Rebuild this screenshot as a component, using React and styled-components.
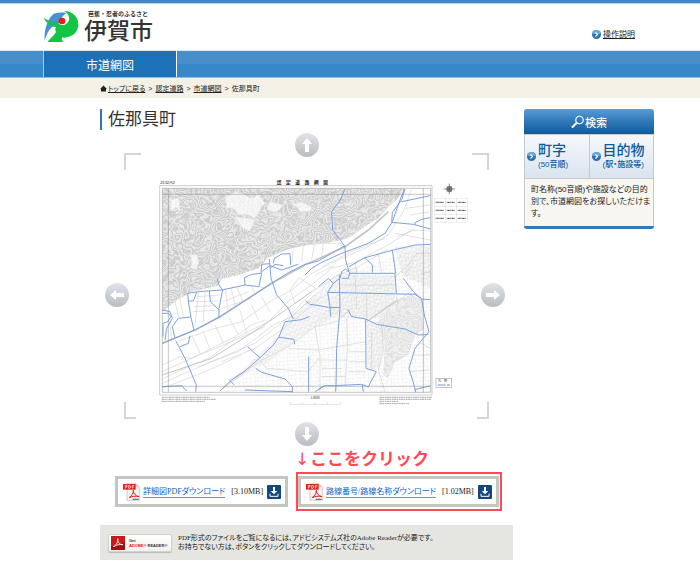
import React from "react";
import styled, { createGlobalStyle } from "styled-components";

const GlobalStyle = createGlobalStyle`
    * {
        box-sizing: border-box;
    }
    body {
        margin: 0;
        background: #fff;
        color: #333;
        font-family: "Liberation Sans", "Noto Sans CJK JP", sans-serif;
        font-feature-settings: "palt";
    }
    h1, h2, p {
        margin: 0;
        font-weight: normal;
    }
    a {
        color: inherit;
    }
    svg {
        display: block;
        flex: none;
    }
`;

const Header = styled.header`
    display: flex;
    justify-content: space-between;
    align-items: center;
    height: 51px;
    padding: 0 65px 0 43px;
    border-top: 3px solid #4389c4;
    border-bottom: 1px solid #dfe8ef;
    box-shadow: inset 0 1px #b5d5ee;
`;

const Brand = styled.a`
    display: flex;
    gap: 5px;
    align-items: center;
    text-decoration: none;
    color: #333;
`;

const BrandText = styled.span`
    display: flex;
    flex-direction: column;
    padding-top: 2px;
`;

const Catch = styled.span`
    padding-left: 4px;
    font-size: 6px;
    font-weight: bold;
    font-feature-settings: normal;
    line-height: 7px;
`;

const CityName = styled.span`
    font-size: 23px;
    font-weight: 500;
    font-feature-settings: normal;
    line-height: 26px;
`;

const HelpLink = styled.a`
    display: flex;
    align-items: center;
    gap: 2px;
    margin-top: 16px;
    font-size: 8px;
    line-height: 12px;
    color: #222;
`;

const Nav = styled.nav`
    display: flex;
    height: 27px;
    padding-left: 43px;
    background: linear-gradient(#468fca 50%, #3887c8 50%);
    border-bottom: 1px solid #8dbce2;
`;

const NavTab = styled.a`
    display: flex;
    align-items: center;
    justify-content: center;
    width: 134px;
    border-left: 1px solid #a8cbe8;
    border-right: 1px solid #fff;
    background: #1d71b7;
    color: #fff;
    font-size: 12px;
    text-decoration: none;
`;

const Breadcrumb = styled.nav`
    display: flex;
    align-items: center;
    gap: 3px;
    height: 20px;
    padding: 0 46px 0 100px;
    background: #f3f0e5;
    font-size: 7px;
    color: #222;
`;

const Home = styled.span`
    display: flex;
    align-items: center;
    gap: 1px;
`;

const Columns = styled.div`
    display: flex;
    align-items: flex-start;
    gap: 11px;
    padding: 11px 46px 8px 100px;
`;

const Main = styled.main`
    flex: 1;
    min-width: 0;
`;

const Title = styled.h1`
    padding-left: 6px;
    border-left: 2px solid #2a76ba;
    font-size: 17px;
    font-feature-settings: normal;
    line-height: 21px;
`;

const Viewer = styled.div`
    display: grid;
    grid-template-columns: 28px 1fr 24px;
    grid-template-rows: 34px 1fr 24px;
    margin: 3px 8px 0 5px;
`;

const Frame = styled.div`
    position: relative;
    grid-area: 1 / 1 / -1 / -1;
    margin: 20px 16px 27px 19px;
    padding: 22px 19px 9px 31px;
`;

const Corner = styled.span`
    position: absolute;
    width: ${(props) => (props.$y === "bottom" ? 12 : 17)}px;
    height: 17px;
    ${(props) => props.$y}: 0;
    ${(props) => props.$x}: 0;
    border: 0 solid #d5d5d5;
    border-${(props) => props.$y}-width: 2px;
    border-${(props) => props.$x}-width: 2px;
`;

const MoveButton = styled.button`
    z-index: 1;
    grid-area: ${(props) => props.$area};
    place-self: ${(props) => props.$place};
    display: flex;
    align-items: center;
    justify-content: center;
    width: 24px;
    height: 24px;
    padding: 0;
    border: 0;
    border-radius: 50%;
    background: linear-gradient(#e0e3e9, #b9bcc0);
    cursor: pointer;
`;

const MapSvg = styled.svg`
    width: 100%;
    height: auto;
    font-family: "Noto Sans CJK JP", sans-serif;
`;

const Note = styled.p`
    padding-left: 195px;
    font: bold 17px/24px "Noto Sans CJK JP", sans-serif;
    color: #fa4d58;
    white-space: nowrap;
`;

const NoteArrow = styled.span`
    display: inline-block;
    width: 15px;
    font-family: "DejaVu Sans", sans-serif;
    font-weight: normal;
`;

const Downloads = styled.div`
    display: flex;
    gap: 10px;
    margin-top: 5px;
    padding-left: 15px;
`;

const DownloadBox = styled.div`
    position: relative;
    display: flex;
    align-items: center;
    height: 31px;
    padding: 0 4px 0 5px;
    border: 3px solid #c5c6bf;
    white-space: nowrap;
`;

const Highlight = styled.span`
    position: absolute;
    inset: -7px -6px -7px -5px;
    border: 2px solid #fa4d58;
    pointer-events: none;
`;

const FileLink = styled.a`
    margin-left: 2px;
    border-bottom: 1px solid #5b9be0;
    font: 8px/11px "Liberation Serif", "Noto Sans CJK JP", serif;
    font-feature-settings: "palt";
    color: #0a63c4;
    text-decoration: none;
`;

const FileSize = styled.span`
    margin: 0 4px 0 6px;
    font: 8px/12px "Liberation Serif", serif;
    color: #222;
`;

const Reader = styled.div`
    display: flex;
    align-items: center;
    gap: 6px;
    height: 35px;
    margin-top: 18px;
    padding: 0 8px;
    background: #e5e6e1;
    font: 7px/9px "Liberation Sans Narrow", "Liberation Serif", "Noto Sans CJK JP", serif;
    font-feature-settings: "palt";
    color: #222;
`;

const ReaderBadge = styled.a`
    display: flex;
    align-items: center;
    gap: 4px;
    width: 64px;
    height: 18px;
    padding: 1px 2px;
    border: 1px solid #d2d2ce;
    border-radius: 2px;
    background: linear-gradient(#fff, #f0f0ee);
    box-shadow: 0 1px 1px #b8b8b4;
    font: bold 4px/5px "Liberation Sans", sans-serif;
    text-decoration: none;
    white-space: nowrap;
    color: #333;

    b {
        color: #e2231a;
    }
`;

const Search = styled.aside`
    width: 130px;
    border-bottom: 3px solid #2f7abb;
    border-radius: 3px;
    overflow: hidden;
`;

const SearchTitle = styled.h2`
    display: flex;
    align-items: center;
    justify-content: center;
    height: 25px;
    background: linear-gradient(#5a9dd6, #2f78b8 50%, #145a99);
    color: #fff;
    font-size: 11px;
    font-weight: 500;
`;

const SearchTabs = styled.div`
    display: flex;
    height: 45px;
    border: 1px solid #c6cacd;
    background: linear-gradient(#f5f8fb, #dae4ef);
`;

const SearchTab = styled.a`
    display: flex;
    flex: 1;
    align-items: center;
    gap: 2px;
    padding: 0 2px;
    color: #0f599e;
    font-size: 14px;
    font-weight: 500;
    line-height: 16px;
    text-decoration: none;
    white-space: nowrap;

    & + & {
        border-left: 1px solid #c6cacd;
    }
    small {
        display: block;
        font-size: 8px;
        line-height: 14px;
    }
`;

const SearchText = styled.p`
    padding: 5px 1px 6px 6px;
    border: 1px solid #c6cacd;
    border-width: 0 1px;
    background: #f7f6f1;
    font-size: 8px;
    line-height: 12px;
    color: #222;
`;

const Bullet = () => (
    <svg width="9" height="9" viewBox="0 0 18 18">
        <circle cx="9" cy="9" r="9" fill="#2d72b0" />
        <path d="M1 8a8 8 0 0 1 16 0z" fill="#6aa9da" />
        <path d="M7 5l4 4-4 4" fill="none" stroke="#fff" strokeWidth="2.4" />
    </svg>
);

const CityLogo = () => (
    <svg width="36" height="33" viewBox="0 0 108 99">
        <path d="M5 92C2 55 16 24 32 11c14-4 28-4 38-2C58 18 50 28 46 46L28 50C16 60 10 74 5 92z" fill="#4791cf" />
        <path d="M63 3c26 0 43 19 43 40 0 24-17 38-42 40l-6-1c-3 5-2 9 3 14H13c10-12 20-20 26-30-3-6-3-10 0-14C22 46 9 38 2 24c14 8 27 13 40 14 12 9 21 9 28 3 8-6 11-14 7-23-2-6-7-12-14-15z" fill="#12c544" />
        <circle cx="57" cy="33" r="10" fill="#f5180e" />
    </svg>
);

const HomeIcon = () => (
    <svg width="7" height="7" viewBox="0 0 14 14">
        <path d="M7 1L0 8h2v5h10V8h2z" fill="#222" />
    </svg>
);

const SearchIcon = () => (
    <svg width="14" height="14" viewBox="0 0 28 28" fill="none" stroke="#fff">
        <circle cx="17" cy="10" r="7.5" strokeWidth="2.4" />
        <path d="M11 16L3 24" strokeWidth="4" strokeLinecap="round" />
    </svg>
);

const ArrowIcon = ({ turn }) => (
    <svg width="16" height="16" viewBox="0 0 16 16">
        <path transform={`rotate(${turn} 8 8)`} d="M8 1l5 6h-3v8H6V7H3z" fill="#fff" />
    </svg>
);

const PdfIcon = () => (
    <svg width="18" height="18" viewBox="0 0 54 54">
        <path d="M12 2h27l11 11v39H12z" fill="#f3f3f3" stroke="#b9b9b9" strokeWidth="2" />
        <path d="M39 2v11h11z" fill="#ccc" />
        <path d="M0 3h38v17H0z" fill="#e21d1d" />
        <path d="M7 17V7h5v5H7M17 7v9h4l2-4-2-5zM28 17V7h6M28 12h5" fill="none" stroke="#fff" strokeWidth="2" />
        <path d="M18 44c9-4 13-14 13-22 0 9 6 17 17 19-11-3-20-1-30 3z" fill="none" stroke="#e21d1d" strokeWidth="3" />
        <path d="M29 49h18" stroke="#777" strokeWidth="4" />
    </svg>
);

const DownloadIcon = () => (
    <svg width="14" height="14" viewBox="0 0 42 42">
        <rect width="42" height="42" rx="3" fill="#12487f" />
        <path d="M18 6h6v12h7L21 28 11 18h7z" fill="#fff" />
        <path d="M9 26v8h24v-8" fill="none" stroke="#fff" strokeWidth="3" />
    </svg>
);

const AdobeIcon = () => (
    <svg width="14" height="14" viewBox="0 0 42 42">
        <rect width="42" height="42" fill="#a90f12" />
        <path d="M0 0h42v18L0 32z" fill="#c91b1c" />
        <path d="M7 32c10-5 15-16 13-24 0 12 6 18 16 18-10-2-20 1-29 6z" fill="none" stroke="#fff" strokeWidth="2.5" />
    </svg>
);

const contourSteps = Array.from({ length: 32 }, (_, i) => (i % 2 ? 0.34 : 0.06)).join(" ");

const roads = [
    "M570 42L556 75 530 110 533 165 556 195 570 215 572 255 582 290",
    "M22 505L120 465 195 425 350 325 400 293 450 268 490 258 570 212",
    "M450 300L470 280 500 262 560 235 640 205 690 175 712 140 735 75 748 42",
    "M710 142L712 112 740 75 750 42M710 142L775 148 826 162M780 150V143L800 133 826 128M740 80L826 62",
    "M582 295H720L724 355M518 352L780 358 800 372 826 374M712 225L722 295",
    "M582 275L630 248 715 225 780 210 826 208M630 248L652 270V293",
    "M745 310L775 350 800 372 808 420 822 470 805 490 780 520 762 580 778 634 782 652",
    "M578 403L590 425 632 432 665 448 750 462 790 480 820 478",
    "M632 432L633 580 664 590 645 625 640 636 620 628 540 632 510 632 480 650M622 630L625 650",
    "M553 300L555 400 545 520 543 632 542 650",
    "M518 352L535 325 520 310 490 335M535 325L555 310 560 290 572 282 584 293 580 310 560 310",
    "M518 352L525 395 527 425M555 398L520 397 480 390 465 388 452 378",
    "M343 252L348 310 365 360 400 400 415 432",
    "M464 424L440 434 390 440 372 485 355 510 315 548 270 588 230 615 195 648",
    "M372 487L417 493 419 508M278 515L315 548M222 614L238 630",
    "M302 580L320 592 390 612 412 635V652M270 645L412 650M461 545V650",
    "M62 497L90 550 124 630 122 650M22 635L80 632 95 648",
    "M98 355L130 350 200 345 270 330M98 355L100 378H115L125 352M100 378L108 428 117 465M108 426L70 430 52 455 60 490",
    "M187 312L192 330 203 345 192 400V430M163 348L166 380 192 405",
    "M270 330L268 308 290 298 318 295 320 268 345 266M270 330L312 335 320 295",
    "M320 290L345 272 380 285 430 268M355 265L358 250 380 237 405 236 407 270M345 280L360 268 385 272",
    "M22 405L45 410 52 430 35 460 30 495M22 415H40L48 425 38 440 24 445V485M105 482L100 505 75 515",
    "M826 632L780 644M505 632L490 645",
];

const lanes = [
    "M22 612L90 580 165 548 240 490 340 440 405 375 470 330 530 280 600 262 690 215 770 165 826 168",
    "M22 625L100 590 180 555 300 505 390 435 480 345 550 300 610 275 700 222",
    "M130 575L250 530 355 450 410 425 480 360M22 570L75 545 110 550 240 485 290 450 330 435",
    "M75 497L170 463 260 440 345 380 410 345 470 295 550 255 640 215 700 180 745 110 770 42",
    "M205 640L315 558 400 515 480 455 545 440 590 400M222 614L270 590",
    "M405 345L432 308 482 340 420 385z M315 558L335 580 460 590M480 455L495 545 460 590",
    "M400 520L490 525 575 510 632 500M495 545V650M575 430L578 510 570 632",
    "M635 440L725 380 775 345M725 360L727 385M635 355V430M600 300L605 400M555 330H720",
    "M680 450L685 530 670 585 690 650M826 540H775M790 500L826 520M765 590L826 585",
    "M720 305L760 270 785 235 826 235M750 300L770 270M600 260L605 293M670 236L680 294",
    "M800 295L826 290M752 100L826 90M765 120L826 110M720 175L826 195M725 185L780 165",
    "M330 235L400 220 455 210 500 205 560 205M410 265L415 220M440 262L445 214M470 256L478 210M500 245L505 206",
    "M125 365L195 360M120 380L190 378M118 395L175 392M115 410L180 406M130 352L120 455M150 352L145 440",
    "M210 340L220 410M228 338L243 398M245 336L265 380M290 334L300 355M315 335L330 340M205 380L280 350M200 400L290 370",
    "M110 480L135 535M145 470L165 525M180 450L205 505M220 425L250 478M255 405L275 475M290 390L310 435M320 365L345 410",
    "M490 555H575M500 580H560M500 605H570M580 530H630M580 560H630M580 590H633M650 470V585",
    "M22 590L120 545 230 500 330 455M200 560L300 520 400 450 500 365M22 640L150 590 260 540",
    "M500 275L600 225 690 190M480 300L540 270M60 380L70 425M75 372L85 425M45 440L50 500",
];

const cells = Array.from({ length: 9 }, (_, i) => ({ x: 838 + (i % 3) * 33, y: 70 + Math.floor(i / 3) * 24 }));

const RoadMap = () => (
    <MapSvg viewBox="0 0 945 705" role="img" aria-label="認定道路網図">
        <defs>
            <filter id="contours" x="0" y="0" width="100%" height="100%" colorInterpolationFilters="sRGB">
                <feTurbulence type="fractalNoise" baseFrequency="0.01" numOctaves="4" seed="8" />
                <feColorMatrix values="0 0 0 0 .45  0 0 0 0 .45  0 0 0 0 .45  1 0 0 0 0" />
                <feComponentTransfer>
                    <feFuncA type="table" tableValues={contourSteps} />
                </feComponentTransfer>
            </filter>
            <clipPath id="hills">
                <path d="M22 40H748L725 75 700 95 670 130 640 148 580 190 520 203 460 208 400 222 340 248 310 280 250 300 200 312 190 332 110 350 60 380 22 410z" />
                <path d="M725 375L770 360 800 375 808 460 780 480 760 540 720 560 700 610 685 600 690 500 665 445z" />
            </clipPath>
            <pattern id="plots" width="34" height="22" patternUnits="userSpaceOnUse" patternTransform="rotate(-4)">
                <path d="M0 1H34M5 1V14M18 1V22M18 12H34M27 12V22M0 14H12" fill="none" stroke="#ddd" />
            </pattern>
            <pattern id="houses" width="17" height="15" patternUnits="userSpaceOnUse" patternTransform="rotate(-24)">
                <path d="M1 2H8V6H1zM11 8H15V12H11zM3 11H7M12 2L15 4M0 14H17" fill="none" stroke="#c8c8c8" />
            </pattern>
        </defs>
        <path d="M14 32H831V660H14z" fill="#fff" stroke="#ccc" strokeWidth="3" />
        <path d="M580 300L720 240 826 215V652H200L420 500 520 400z" fill="url(#plots)" />
        <path d="M200 640L315 535 370 480 400 430 470 365 540 300 610 275 600 400 470 460 340 560zM635 440H670L690 500 670 585 640 580zM720 215L826 212V340L740 300zM555 300H720V430H555z" fill="url(#houses)" />
        <g clipPath="url(#hills)">
            <rect x="22" y="40" width="805" height="612" fill="#f4f4f4" />
            <rect x="22" y="40" width="805" height="612" filter="url(#contours)" />
            <path d="M660 350H815V615H660z" fill="#fff" fillOpacity=".4" />
        </g>
        <path d="M210 65L245 50 290 70 310 58 330 85 318 100 300 130 275 118 250 120 235 98 215 100zM410 88L440 82 470 95 465 108 435 112 428 96zM45 75L72 68 75 108 62 98 50 105zM345 80L385 90 365 112 335 105zM240 125L270 128 300 135 285 170 262 158zM105 240L125 238 132 262 122 285 105 278 112 260z" fill="#fff" fillOpacity=".7" stroke="#ddd" />
        <path d="M160 60L205 115 250 165 275 175 300 155M130 140L180 190 190 255 185 312" fill="none" stroke="#c5c5c5" strokeWidth="2" />
        <path d={lanes.join("")} fill="none" stroke="#c4c4c4" strokeWidth="1.5" />
        <path d="M22 505L120 465 195 425 350 325 450 270 570 215 640 165 700 110" fill="none" stroke="#c4c4c4" strokeWidth="5" />
        <path d="M635 440L725 375M22 600L170 550 320 455 470 350" fill="none" stroke="#bbb" strokeWidth="2.5" />
        <path d={roads.join("")} fill="none" stroke="#7ba2de" strokeWidth="3" strokeLinejoin="round" />
        <path d="M22 40H827V652H22zM40 40V652M805 40V652M22 58H827M22 634H827" fill="none" stroke="#8a8a8a" strokeWidth="1.5" />
        <text x="16" y="28" fontSize="10" fill="#222">20-02(4)2</text>
        <text x="442" y="28" fontSize="14" fontWeight="bold" textAnchor="middle" fill="#222">認　定　道　路　網　図</text>
        <g fill="none" stroke="#555">
            <circle cx="883" cy="42" r="8" fill="#999" strokeWidth="2" />
            <path d="M883 26V58M866 42H900M875 34L891 50M891 34L875 50" strokeWidth="2" />
        </g>
        {cells.map((cell) => (
            <g key={`${cell.x}-${cell.y}`}>
                <rect x={cell.x} y={cell.y} width="33" height="24" fill="#fff" stroke="#ccc" />
                <path d={`M${cell.x + 4} ${cell.y + 12}h25`} stroke="#666" strokeWidth="4" strokeDasharray="3 1" />
            </g>
        ))}
        <rect x="843" y="610" width="47" height="27" fill="#fff" stroke="#aaa" strokeWidth="2" />
        <text x="849" y="621" fontSize="9" fill="#222">凡　例</text>
        <path d="M848 630H872" stroke="#6e97d8" strokeWidth="3" />
        <path d="M876 630H885" stroke="#888" strokeWidth="3" />
        <path d="M20 667H165M20 673H182M20 679H150M673 667H831M673 673H828M673 679H730M673 686H762" stroke="#999" strokeWidth="2.5" strokeDasharray="9 1 5 2 3 1" />
        <text x="480" y="671" fontSize="9" textAnchor="middle" fill="#333">1:5000</text>
        <path d="M404 681V688H557V681M442 682V688M480 682V688M518 682V688" fill="none" stroke="#aaa" />
    </MapSvg>
);

const moves = [
    { label: "上へ", area: "1 / 2", place: "start center", turn: 0 },
    { label: "左へ", area: "2 / 1", place: "center start", turn: 270 },
    { label: "右へ", area: "2 / 3", place: "center", turn: 90 },
    { label: "下へ", area: "3 / 2", place: "center", turn: 180 },
];

const files = [
    { name: "詳細図PDFダウンロード", size: "[3.10MB]" },
    { name: "路線番号/路線名称ダウンロード", size: "[1.02MB]", marked: true },
];

export default function App() {
    return (
        <>
            <GlobalStyle />
            <Header>
                <Brand href="#">
                    <CityLogo />
                    <BrandText>
                        <Catch>芭蕉・忍者のふるさと</Catch>
                        <CityName>伊賀市</CityName>
                    </BrandText>
                </Brand>
                <HelpLink href="#help">
                    <Bullet />
                    操作説明
                </HelpLink>
            </Header>
            <Nav>
                <NavTab href="#map">市道網図</NavTab>
            </Nav>
            <Breadcrumb>
                <Home>
                    <HomeIcon />
                    <a href="#top">トップに戻る</a>
                </Home>
                <span>&gt;</span>
                <a href="#roads">認定道路</a>
                <span>&gt;</span>
                <a href="#map">市道網図</a>
                <span>&gt;</span>
                <span>佐那具町</span>
            </Breadcrumb>
            <Columns>
                <Main>
                    <Title>佐那具町</Title>
                    <Viewer>
                        <Frame>
                            <Corner $y="top" $x="left" />
                            <Corner $y="top" $x="right" />
                            <Corner $y="bottom" $x="left" />
                            <Corner $y="bottom" $x="right" />
                            <RoadMap />
                        </Frame>
                        {moves.map((move) => (
                            <MoveButton
                                key={move.label}
                                type="button"
                                aria-label={move.label}
                                $area={move.area}
                                $place={move.place}
                            >
                                <ArrowIcon turn={move.turn} />
                            </MoveButton>
                        ))}
                    </Viewer>
                    <Note>
                        <NoteArrow>↓</NoteArrow>ここをクリック
                    </Note>
                    <Downloads>
                        {files.map((file) => (
                            <DownloadBox key={file.name}>
                                {file.marked && <Highlight />}
                                <PdfIcon />
                                <FileLink href="#pdf">{file.name}</FileLink>
                                <FileSize>{file.size}</FileSize>
                                <DownloadIcon />
                            </DownloadBox>
                        ))}
                    </Downloads>
                    <Reader>
                        <ReaderBadge href="#reader">
                            <AdobeIcon />
                            <span>
                                Get<br />
                                <b>ADOBE®</b> READER®
                            </span>
                        </ReaderBadge>
                        <p>
                            PDF形式のファイルをご覧になるには、アドビシステムズ社のAdobe Readerが必要です。<br />
                            お持ちでない方は、ボタンをクリックしてダウンロードしてください。
                        </p>
                    </Reader>
                </Main>
                <Search>
                    <SearchTitle>
                        <SearchIcon />
                        検索
                    </SearchTitle>
                    <SearchTabs>
                        <SearchTab href="#town">
                            <Bullet />
                            <span>町字<small>(50音順)</small></span>
                        </SearchTab>
                        <SearchTab href="#place">
                            <Bullet />
                            <span>目的物<small>(駅・施設等)</small></span>
                        </SearchTab>
                    </SearchTabs>
                    <SearchText>町名称(50音順)や施設などの目的別で、市道網図をお探しいただけます。</SearchText>
                </Search>
            </Columns>
        </>
    );
}
